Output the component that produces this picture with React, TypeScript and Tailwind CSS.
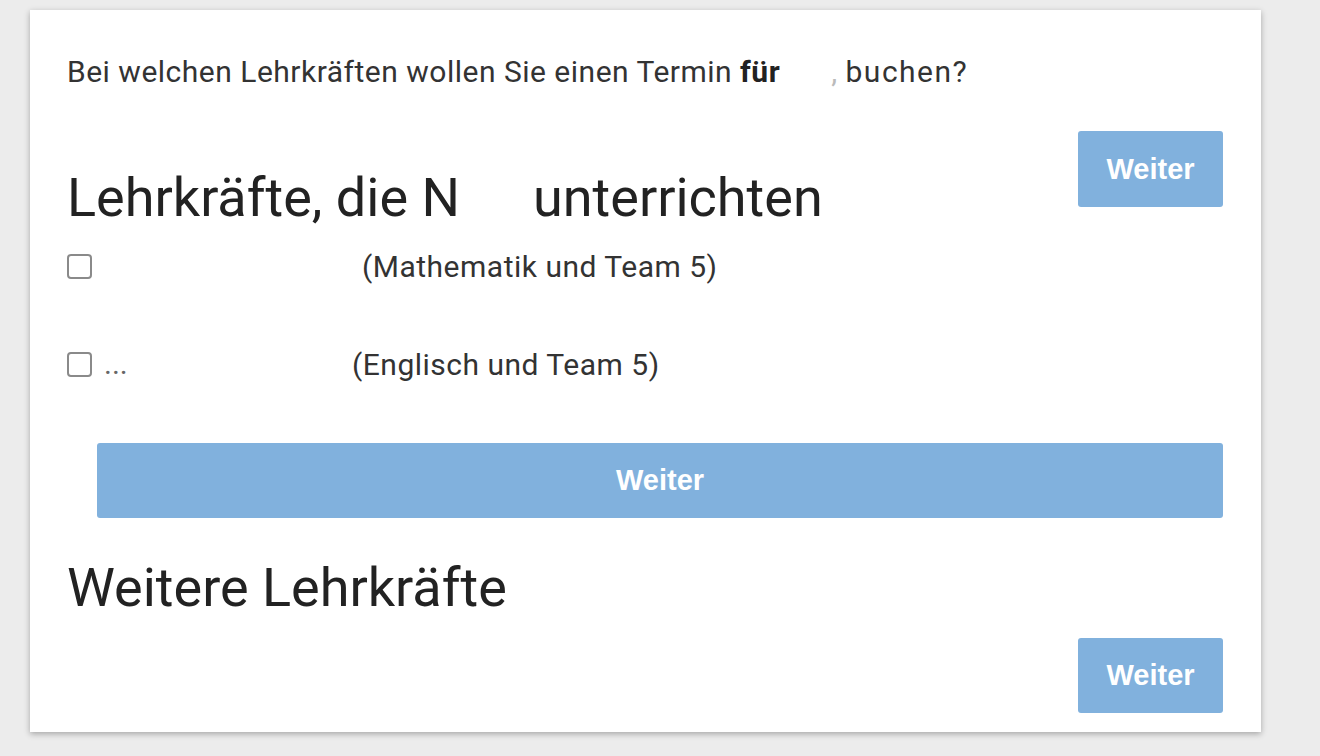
import React from "react";

const font = { fontFamily: "Roboto, 'Noto Sans', sans-serif" };

function Btn({ className = "" }: { className?: string }) {
  return (
    <button
      className={`bg-[#81b1dd] text-white font-bold rounded-[3px] text-[29px] leading-none flex items-center justify-center shrink-0 ${className}`}
      style={{ fontFamily: "'Liberation Sans', Arial, sans-serif" }}
    >
      Weiter
    </button>
  );
}

function Box() {
  return <span className="w-[25px] h-[25px] border-2 border-[#8a8a8a] rounded-[4px] shrink-0"></span>;
}

export default function App() {
  return (
    <div className="w-[1320px] h-[756px] bg-[#ececec] overflow-hidden" style={font}>
      <div className="ml-[30px] mt-[10px] w-[1231px] h-[722px] bg-white shadow-[0_2px_6px_rgba(0,0,0,0.3)] pl-[37px] pr-[38px] pt-[42px] text-[#222]">
        <p className="text-[30px] leading-[40px] tracking-[0.5px] text-[#333]">
          Bei welchen Lehrkräften wollen Sie einen Termin <b className="text-[#222]">für</b>
          <span className="inline-block w-[51px]"></span>
          <span className="text-[#bbb]">,</span> <span className="tracking-[1.5px]">buchen?</span>
        </p>
        <div className="mt-[39px] flex items-start justify-between">
          <h2 className="mt-[37px] text-[54px] leading-[60px] text-[#222]">
            Lehrkräfte, die N<span className="inline-block w-[73px]"></span>unterrichten
          </h2>
          <Btn className="w-[145px] h-[76px]" />
        </div>
        <div className="mt-[20px] flex items-center h-[36px]">
          <Box />
          <span className="text-[30px] tracking-[0.5px] text-[#333] pl-[270px]">(Mathematik und Team 5)</span>
        </div>
        <div className="mt-[62px] flex items-center h-[36px]">
          <Box />
          <span className="text-[30px] text-[#666] pl-[12px] w-[260px] leading-none">...</span>
          <span className="text-[30px] tracking-[0.5px] text-[#333]">(Englisch und Team 5)</span>
        </div>
        <div className="pl-[30px] mt-[61px]">
          <Btn className="w-full h-[75px]" />
        </div>
        <h2 className="mt-[40px] text-[54px] leading-[60px] text-[#222]">Weitere Lehrkräfte</h2>
        <div className="mt-[20px] flex justify-end">
          <Btn className="w-[145px] h-[75px]" />
        </div>
      </div>
    </div>
  );
}
